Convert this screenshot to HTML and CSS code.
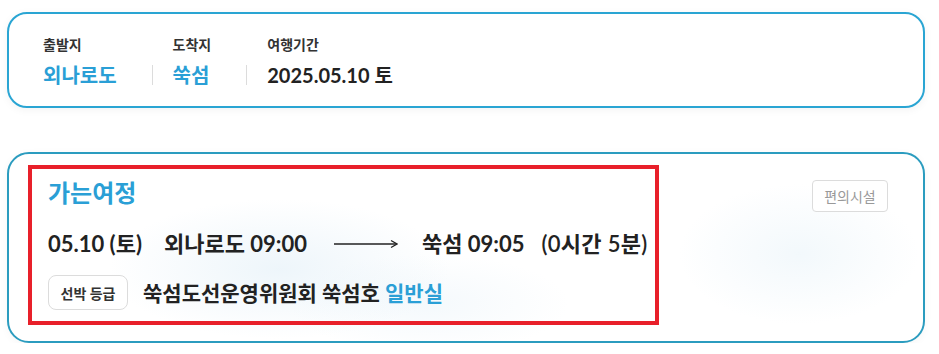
FILE: index.html
```html
<!DOCTYPE html>
<html lang="ko">
<head>
<meta charset="utf-8">
<title>여정</title>
<link rel="stylesheet" href="styles.css">
</head>
<body>
<div class="page">
  <section class="summary">
    <div class="summary-grid">
      <div class="label c1">출발지</div>
      <div class="label c3">도착지</div>
      <div class="label c5">여행기간</div>
      <div class="value blue">외나로도</div>
      <div class="sep"></div>
      <div class="value blue">쑥섬</div>
      <div class="sep"></div>
      <div class="value">2025.05.10 토</div>
    </div>
  </section>

  <section class="trip">
    <div class="highlight">
      <h2 class="trip-title">가는여정</h2>
      <div class="route">
        <span class="date">05.10 (토)</span>
        <span class="dep">외나로도 09:00</span>
        <svg class="arrow" width="64" height="10" viewBox="0 0 64 10" aria-hidden="true">
          <line x1="0" y1="5" x2="62" y2="5" stroke="#222" stroke-width="1.6"/>
          <path d="M57 1.5 L63 5 L57 8.5" fill="none" stroke="#222" stroke-width="1.3"/>
        </svg>
        <span class="arr">쑥섬 09:05</span>
        <span class="dur">(0시간 5분)</span>
      </div>
      <div class="ship">
        <span class="badge">선박 등급</span>
        <span class="ship-name">쑥섬도선운영위원회 쑥섬호 <span class="blue">일반실</span></span>
      </div>
    </div>
    <button class="facility">편의시설</button>
  </section>
</div>
</body>
</html>
```

FILE: styles.css
```css
* { box-sizing: border-box; }
html, body { margin: 0; padding: 0; background: #fff; }
body {
  font-family: Lato, "Noto Sans CJK KR", "Noto Sans", sans-serif;
  color: #222;
}
.page {
  width: 939px;
  padding: 12px 14px 0 7px;
}
.blue { color: #2a9fd6; }

.summary {
  width: 918px;
  height: 96px;
  border: 2px solid #2aa5d3;
  border-radius: 20px;
  padding: 21px 0 0 34px;
  box-shadow: 0 2px 8px rgba(0, 0, 0, 0.05);
}
.summary-grid {
  display: grid;
  grid-template-columns: auto auto auto auto auto 1fr;
  grid-template-rows: 20px 28px;
  row-gap: 6px;
  justify-content: start;
}
.label {
  font-size: 14px;
  font-weight: 700;
  line-height: 20px;
  color: #333;
  grid-row: 1;
}
.c1 { grid-column: 1; }
.c3 { grid-column: 3; }
.c5 { grid-column: 5; }
.value {
  grid-row: 2;
  font-size: 20px;
  font-weight: 700;
  line-height: 28px;
  white-space: nowrap;
}
.sep {
  grid-row: 2;
  width: 1px;
  height: 20px;
  align-self: center;
  background: #dcdcdc;
  margin: 0 20px 0 35px;
}
.sep:nth-of-type(n) { }

.trip {
  margin-top: 44px;
  width: 918px;
  height: 191px;
  border: 2px solid #2b9cbf;
  border-radius: 22px;
  padding: 11px 35px 0 19px;
  display: flex;
  align-items: flex-start;
  box-shadow: 0 2px 8px rgba(0, 0, 0, 0.04);
  background:
    radial-gradient(ellipse 170px 70px at 270px 115px, rgba(220, 236, 246, 0.5), rgba(220, 236, 246, 0) 100%),
    radial-gradient(ellipse 140px 50px at 420px 150px, rgba(220, 236, 246, 0.3), rgba(220, 236, 246, 0) 100%),
    radial-gradient(ellipse 120px 70px at 790px 100px, rgba(224, 239, 247, 0.4), rgba(224, 239, 247, 0) 100%),
    #fff;
}
.highlight {
  border: 4px solid #e8202a;
  width: 631px;
  height: 160px;
  padding: 8px 0 0 16px;
}
.trip-title {
  margin: 0;
  font-size: 24px;
  font-weight: 700;
  line-height: 32px;
  color: #2a9fd6;
}
.route {
  margin-top: 20px;
  display: flex;
  align-items: center;
  height: 30px;
  font-size: 22px;
  font-weight: 700;
  line-height: 30px;
  white-space: nowrap;
}
.dep { margin-left: 22px; }
.arrow { margin-left: 27px; }
.arr { margin-left: 24px; }
.dur { margin-left: 17px; font-weight: 600; letter-spacing: 0.3px; }
.ship {
  margin-top: 16px;
  display: flex;
  align-items: center;
}
.badge {
  display: inline-flex;
  align-items: center;
  justify-content: center;
  width: 80px;
  height: 35px;
  border: 1px solid #dcdcdc;
  border-radius: 8px;
  background: #fff;
  font-size: 14px;
  font-weight: 700;
  color: #333;
}
.ship-name {
  margin-left: 15px;
  font-size: 21px;
  font-weight: 700;
  line-height: 28px;
  white-space: nowrap;
}
.facility {
  margin-left: auto;
  margin-top: 15px;
  width: 76px;
  height: 32px;
  border: 1px solid #dcdcdc;
  border-radius: 4px;
  background: #fff;
  font-family: Lato, "Noto Sans CJK KR", sans-serif;
  font-size: 14px;
  color: #999;
  padding: 0;
}
```
